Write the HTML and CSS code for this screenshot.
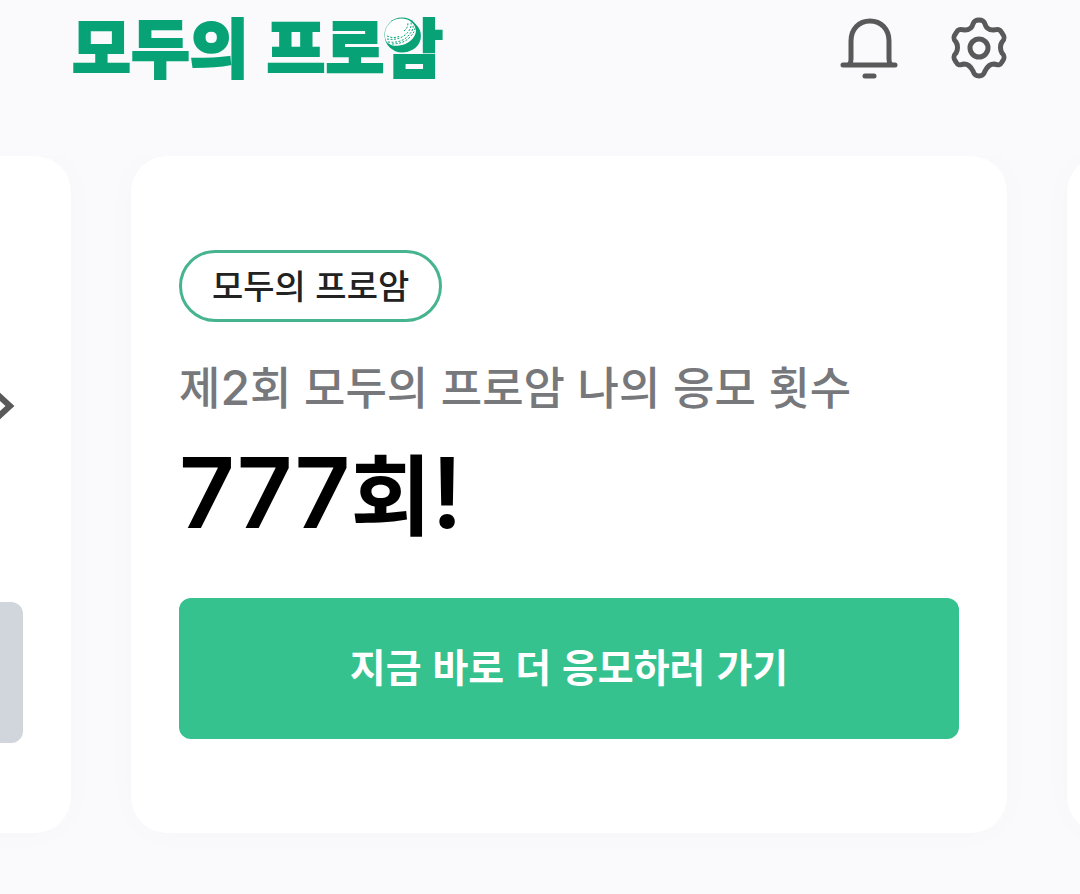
FILE: index.html
```html
<!DOCTYPE html>
<html lang="ko">
<head>
<meta charset="utf-8">
<meta name="viewport" content="width=device-width, initial-scale=1">
<title>모두의 프로암</title>
<link rel="stylesheet" href="styles.css">
</head>
<body>
<header class="header">
  <h1 class="logo">모두의 프로<span class="logo-last">암<svg class="ball" viewBox="0 0 36 36" aria-hidden="true">
    <circle cx="18" cy="18" r="17.500" fill="#07a376"/>
    <path d="M17 1.500a16 16 0 0 0-15 22c2 4 7 6 13 5 9-1 16-7 17-14 0-7-6-13-15-13z" fill="#fff"/>
    <g fill="none" stroke="#07a376" stroke-width="1" stroke-dasharray="2 1.500">
      <path d="M3 19c4 2 9 2 13 0"/>
      <path d="M3 22c7 1 13 0 18-4s7-9 6-13"/>
      <path d="M4 25c8 1 15-1 19-5s7-8 6-12"/>
      <path d="M8 27c7 0 13-2 17-6s6-7 6-10"/>
      <path d="M20 14c3-2 4-5 4-9"/>
    </g>
  </svg></span></h1>
  <nav class="actions">
    <button class="icon-button" type="button" aria-label="알림">
      <svg viewBox="0 0 60 64" aria-hidden="true"><path d="M4 50h52M7 50c4 0 5-2 5-6V26C12 14 20 6 31 6s19 8 19 20v18c0 4 1 6 5 6M26 61h9"/></svg>
    </button>
    <button class="icon-button" type="button" aria-label="설정">
      <svg viewBox="0 0 60 64" aria-hidden="true"><path d="M30 5C34 5 35 6 36 9C37 13 40 15 44 15C49 14 51 14 53 18C56 22 56 24 53 27C51 30 51 35 53 38C56 41 56 43 53 47C51 51 49 50 45 49C40 49 38 52 36 56C35 59 34 61 30 61C26 61 25 59 24 56C22 52 20 49 15 49C11 50 9 51 7 47C4 43 4 41 7 38C9 35 9 30 7 27C4 24 4 22 7 18C9 14 11 14 16 15C20 15 23 13 24 9C25 6 26 5 30 5Z"/><circle cx="30" cy="33" r="9"/></svg>
    </button>
  </nav>
</header>
<main class="carousel">
  <div class="track">
    <section class="card card-previous">
      <button class="next" type="button" aria-label="다음"><svg viewBox="0 0 20 32" aria-hidden="true"><path d="M3 5l12 11L3 27"/></svg></button>
      <button class="cta cta-muted" type="button" aria-label="응모 완료" disabled></button>
    </section>
    <section class="card">
      <span class="chip">모두의 프로암</span>
      <p class="subtitle">제<span class="subtitle-digit">2</span>회 모두의 프로암 나의 응모 횟수</p>
      <h2 class="count"><span class="count-digits">777</span>회<span class="count-digits">!</span></h2>
      <button class="cta" type="button">지금 바로 더 응모하러 가기</button>
    </section>
    <section class="card"></section>
  </div>
</main>
</body>
</html>
```
FILE: styles.css
```css
* {
  box-sizing: border-box;
}

body {
  margin: 0;
  background: #fafafd;
  color: #222;
  font-family: "Noto Sans CJK KR", sans-serif;
}

button {
  border: 0;
  padding: 0;
  font: inherit;
}

.header {
  display: flex;
  justify-content: space-between;
  align-items: flex-start;
  padding: 15px 71px 77px 72px;
}

.logo {
  margin: 0;
  color: #07a376;
  font-size: 64px;
  font-weight: 900;
  line-height: 58px;
  white-space: nowrap;
  -webkit-text-stroke: 2px #07a376;
}

.logo-last {
  position: relative;
}

.ball {
  position: absolute;
  top: 19px;
  left: 0;
  width: 36px;
  height: 36px;
}

.actions {
  display: flex;
  gap: 50px;
}

.icon-button {
  width: 60px;
  height: 64px;
  background: none;
}

.icon-button svg {
  display: block;
  width: 100%;
  fill: none;
  stroke: #595959;
  stroke-width: 5;
  stroke-linecap: round;
  stroke-linejoin: round;
}

.carousel {
  overflow: hidden;
  padding-bottom: 61px;
}

.track {
  display: flex;
  gap: 60px;
  margin-left: calc(275px - 100%);
  width: 100%;
}

.card {
  display: flex;
  flex: 0 0 calc(100% - 204px);
  flex-direction: column;
  align-items: flex-start;
  padding: 94px 48px;
  border-radius: 36px;
  background: #fff;
  box-shadow: 0 0 36px rgba(40, 40, 60, 0.02);
}

.card-previous {
  align-items: flex-end;
  justify-content: space-between;
  padding-top: 234px;
  padding-bottom: 90px;
}

.next {
  display: flex;
  margin-right: 8px;
  background: none;
}

.next svg {
  width: 20px;
  height: 32px;
  fill: none;
  stroke: #595959;
  stroke-width: 6;
}

.chip {
  padding: 0 30px 2px;
  border: 3px solid #46b48e;
  border-radius: 36px;
  font-size: 34px;
  font-weight: 500;
  line-height: 64px;
}

.subtitle {
  margin: 28px 0 0;
  color: #77787b;
  font-size: 45px;
  font-weight: 500;
  line-height: 72px;
  white-space: nowrap;
}

.subtitle-digit {
  font-family: Inter, sans-serif;
  font-size: 48px;
  line-height: 1;
}

.count {
  margin: 8px 0 0;
  color: #000;
  font-size: 88px;
  font-weight: 700;
  line-height: 120px;
}

.count-digits {
  font-family: Inter, sans-serif;
  font-size: 97px;
  font-weight: 600;
  line-height: 1;
}

.cta {
  width: 100%;
  height: 141px;
  margin-top: 48px;
  padding-bottom: 8px;
  border-radius: 12px;
  background: #35c28f;
  color: #fff;
  font-size: 39px;
  font-weight: 700;
}

.cta-muted {
  margin-top: 0;
  background: #d1d5dc;
}
```
